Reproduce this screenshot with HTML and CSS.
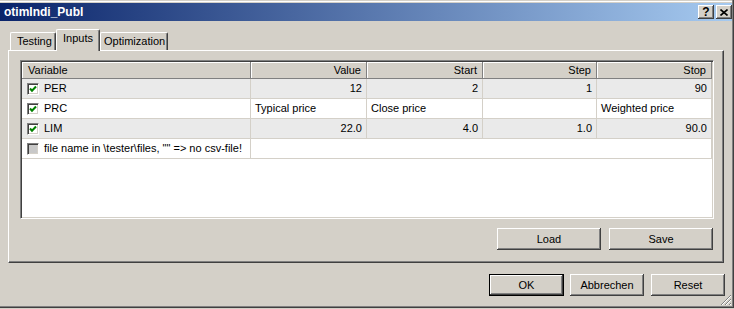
FILE: index.html
```html
<!DOCTYPE html>
<html lang="de">
<head>
  <meta charset="UTF-8">
  <title>otimIndi_Publ</title>
  <link rel="stylesheet" href="styles.css">
</head>
<body>
  <div class="window">
    <div class="titlebar">
      <span class="title">otimIndi_Publ</span>
      <div class="caption-buttons">
        <span class="cap-btn help">?</span>
        <span class="cap-btn">
          <svg width="8" height="7" viewBox="0 0 8 7"><path d="M0.5 0.5 L7.5 6.5 M7.5 0.5 L0.5 6.5" stroke="#000" stroke-width="1.6"/></svg>
        </span>
      </div>
    </div>

    <div class="tabs">
      <div class="tab">Testing</div>
      <div class="tab active">Inputs</div>
      <div class="tab">Optimization</div>
    </div>

    <div class="panel">
      <div class="grid-box">
        <div class="grid">
          <div class="hd left">Variable</div>
          <div class="hd">Value</div>
          <div class="hd">Start</div>
          <div class="hd">Step</div>
          <div class="hd">Stop</div>

          <div class="cell var alt"><span class="check on"><svg width="8" height="8" viewBox="0 0 8 8"><path d="M1 3.5 L3 5.8 L7 1.5" fill="none" stroke="#008000" stroke-width="2"/></svg></span>PER</div>
          <div class="cell num alt">12</div>
          <div class="cell num alt">2</div>
          <div class="cell num alt">1</div>
          <div class="cell num alt">90</div>

          <div class="cell var"><span class="check on"><svg width="8" height="8" viewBox="0 0 8 8"><path d="M1 3.5 L3 5.8 L7 1.5" fill="none" stroke="#008000" stroke-width="2"/></svg></span>PRC</div>
          <div class="cell">Typical price</div>
          <div class="cell">Close price</div>
          <div class="cell"></div>
          <div class="cell">Weighted price</div>

          <div class="cell var alt"><span class="check on"><svg width="8" height="8" viewBox="0 0 8 8"><path d="M1 3.5 L3 5.8 L7 1.5" fill="none" stroke="#008000" stroke-width="2"/></svg></span>LIM</div>
          <div class="cell num alt">22.0</div>
          <div class="cell num alt">4.0</div>
          <div class="cell num alt">1.0</div>
          <div class="cell num alt">90.0</div>

          <div class="cell var"><span class="check off"></span>file name in \tester\files, "" =&gt; no csv-file!</div>
          <div class="cell wide"></div>
        </div>
      </div>

      <div class="panel-actions">
        <button class="btn wide-btn">Load</button>
        <button class="btn wide-btn">Save</button>
      </div>
    </div>

    <div class="dialog-actions">
      <button class="btn default">OK</button>
      <button class="btn">Abbrechen</button>
      <button class="btn">Reset</button>
    </div>

    <svg class="grip" width="12" height="12" viewBox="0 0 12 12">
      <path d="M11 1 L1 11 M11 5 L5 11 M11 9 L9 11" stroke="#808080" stroke-width="1"/>
      <path d="M11 2 L2 11 M11 6 L6 11 M11 10 L10 11" stroke="#fff" stroke-width="1"/>
    </svg>
  </div>
</body>
</html>
```

FILE: styles.css
```css
* {
  box-sizing: border-box;
}
body {
  margin: 0;
  background: #d4d0c8;
  font-family: "Liberation Sans", Arial, sans-serif;
  font-size: 11px;
  color: #000;
}
.window {
  position: relative;
  width: 734px;
  height: 308px;
  padding: 3px 2px 0 0;
  background: #d4d0c8;
  box-shadow: inset -1px -1px #404040, inset -2px -2px #808080, inset 0 1px #d4d0c8, inset 0 2px #fff;
}

/* title bar */
.titlebar {
  height: 18px;
  display: flex;
  align-items: center;
  justify-content: space-between;
  padding-left: 4px;
  background: linear-gradient(to right, #0a246a, #a6caf0);
}
.title {
  color: #fff;
  font-weight: bold;
  font-size: 12px;
}
.caption-buttons {
  display: flex;
  gap: 2px;
}
.cap-btn {
  width: 16px;
  height: 14px;
  display: flex;
  align-items: center;
  justify-content: center;
  background: #d4d0c8;
  box-shadow: inset -1px -1px #404040, inset 1px 1px #fff, inset -2px -2px #808080;
}
.cap-btn.help {
  font-weight: bold;
  font-size: 12px;
  line-height: 14px;
}

/* tabs */
.tabs {
  height: 29px;
  display: flex;
  align-items: flex-end;
  padding-left: 10px;
}
.tab {
  height: 18px;
  padding: 0 6px;
  line-height: 16px;
  white-space: nowrap;
  border-top: 1px solid #fff;
  border-left: 1px solid #fff;
  border-right: 1px solid #404040;
  border-radius: 2px 2px 0 0;
  box-shadow: inset -1px 0 #808080;
}
.tab:nth-child(1) { width: 46px; }
.tab:nth-child(3) {
  width: 68px;
  padding: 0 1px 0 3px;
}
.tab.active {
  position: relative;
  z-index: 1;
  width: 44px;
  height: 22px;
  margin-bottom: -1px;
  line-height: 17px;
  background: #d4d0c8;
}

/* panel */
.panel {
  width: 716px;
  height: 213px;
  margin-left: 8px;
  padding: 9px 9px 0 11px;
  border-top: 1px solid #fff;
  border-left: 1px solid #fff;
  border-right: 1px solid #404040;
  border-bottom: 1px solid #404040;
  box-shadow: inset -1px -1px #808080;
}
.grid-box {
  width: 694px;
  height: 159px;
  background: #fff;
  border: 1px solid;
  border-color: #808080 #fff #fff #808080;
  box-shadow: inset 1px 1px #404040, inset -1px -1px #d4d0c8;
  padding: 1px;
}
.grid {
  display: grid;
  grid-template-columns: 229px 116px 116px 114px 115px;
  grid-auto-rows: 20px;
  grid-template-rows: 17px;
}
.hd {
  padding: 0 5px;
  line-height: 16px;
  text-align: right;
  background: #d4d0c8;
  border-right: 1px solid #808080;
  border-bottom: 1px solid #808080;
  box-shadow: inset 1px 1px #fff;
}
.hd.left {
  text-align: left;
  padding-left: 6px;
}
.cell {
  padding: 0 4px;
  line-height: 19px;
  white-space: nowrap;
  border-right: 1px solid #d4d0c8;
  border-bottom: 1px solid #d4d0c8;
}
.cell.alt {
  background: #eaeaea;
}
.cell.num {
  text-align: right;
}
.cell.var {
  display: flex;
  align-items: center;
  gap: 5px;
  padding-left: 5px;
}
.cell.wide {
  grid-column: span 4;
}
.check {
  width: 12px;
  height: 12px;
  display: flex;
  align-items: center;
  justify-content: center;
  flex: none;
  background: #fff;
  border: 1px solid;
  border-color: #808080 #fff #fff #808080;
  box-shadow: inset 1px 1px #404040, inset -1px -1px #d4d0c8;
}
.check.off {
  background: #c8c8c8;
}

/* buttons */
.btn {
  height: 22px;
  padding: 0;
  font-family: inherit;
  font-size: 11px;
  color: #000;
  background: #d4d0c8;
  border: none;
  box-shadow: inset -1px -1px #404040, inset 1px 1px #fff, inset -2px -2px #808080;
}
.panel-actions {
  display: flex;
  justify-content: flex-end;
  gap: 8px;
  margin: 9px 1px 0 0;
}
.wide-btn {
  width: 104px;
}
.dialog-actions {
  display: flex;
  justify-content: flex-end;
  gap: 6px;
  margin: 11px 7px 0 0;
}
.dialog-actions .btn {
  width: 74px;
}
.dialog-actions .btn:last-child {
  margin-left: 1px;
}
.dialog-actions .btn.default {
  width: 75px;
  border: 1px solid #000;
}
.grip {
  position: absolute;
  right: 2px;
  bottom: 2px;
}
```
